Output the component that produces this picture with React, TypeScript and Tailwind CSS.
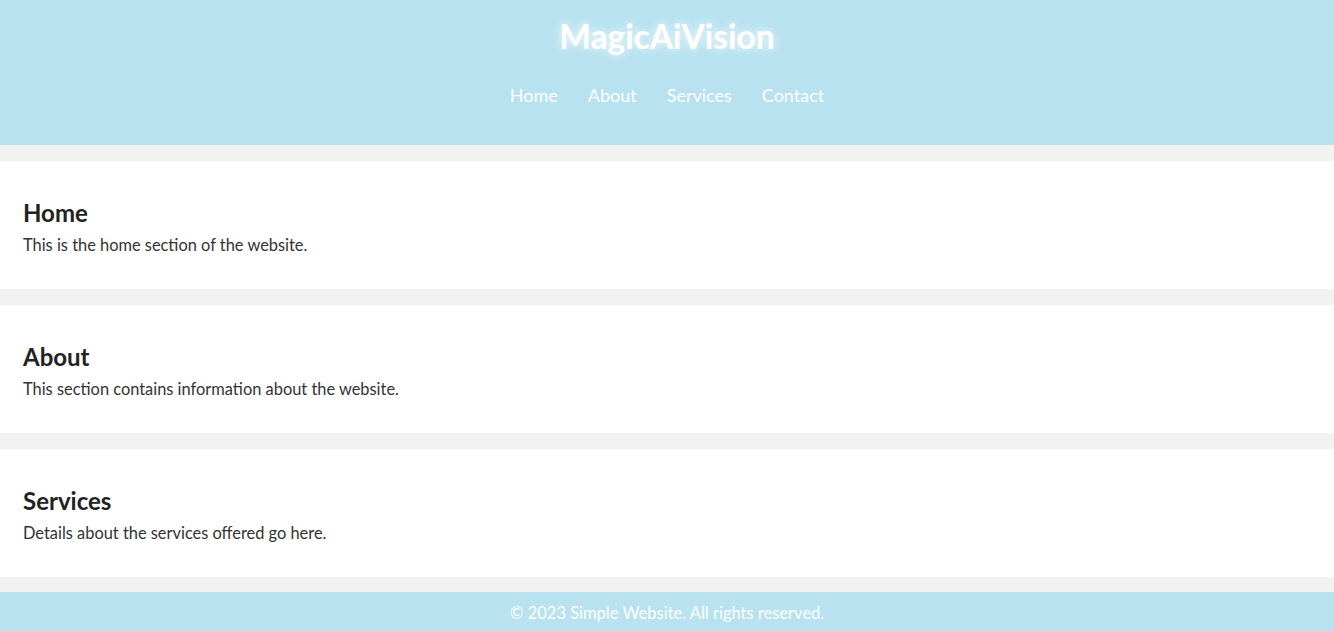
function Section({ title, text }: { title: string; text: string }) {
    return (
        <section className="bg-white px-[23px] pt-[37px] pb-[34px]">
            <h2 className="text-[24px] leading-[30px] font-bold text-[#222]">{title}</h2>
            <p className="mt-[7px] text-[16.4px] leading-[20px] text-[#333]">{text}</p>
        </section>
    )
}

export default function App() {
    return (
        <div className="min-h-[631px] bg-[#f2f2f2] font-['Lato',sans-serif]">
            <header className="bg-[#b8e2f0] text-white text-center pt-4 pb-[38px]">
                <h1 className="text-[33.5px] leading-[40px] font-bold [text-shadow:0_0_10px_rgba(255,255,255,0.9)]">
                    MagicAiVision
                </h1>
                <nav className="mt-[27px] flex justify-center gap-[30px] text-[18px] leading-[24px]">
                    <a href="#home">Home</a>
                    <a href="#about">About</a>
                    <a href="#services">Services</a>
                    <a href="#contact">Contact</a>
                </nav>
            </header>

            <main className="flex flex-col gap-4 py-4">
                <Section title="Home" text="This is the home section of the website." />
                <Section title="About" text="This section contains information about the website." />
                <Section title="Services" text="Details about the services offered go here." />
            </main>

            <footer className="bg-[#b8e2f0] text-white text-center text-[16.5px] leading-[20px] pt-[11px] pb-[9px] -mt-px">
                © 2023 Simple Website. All rights reserved.
            </footer>
        </div>
    )
}
